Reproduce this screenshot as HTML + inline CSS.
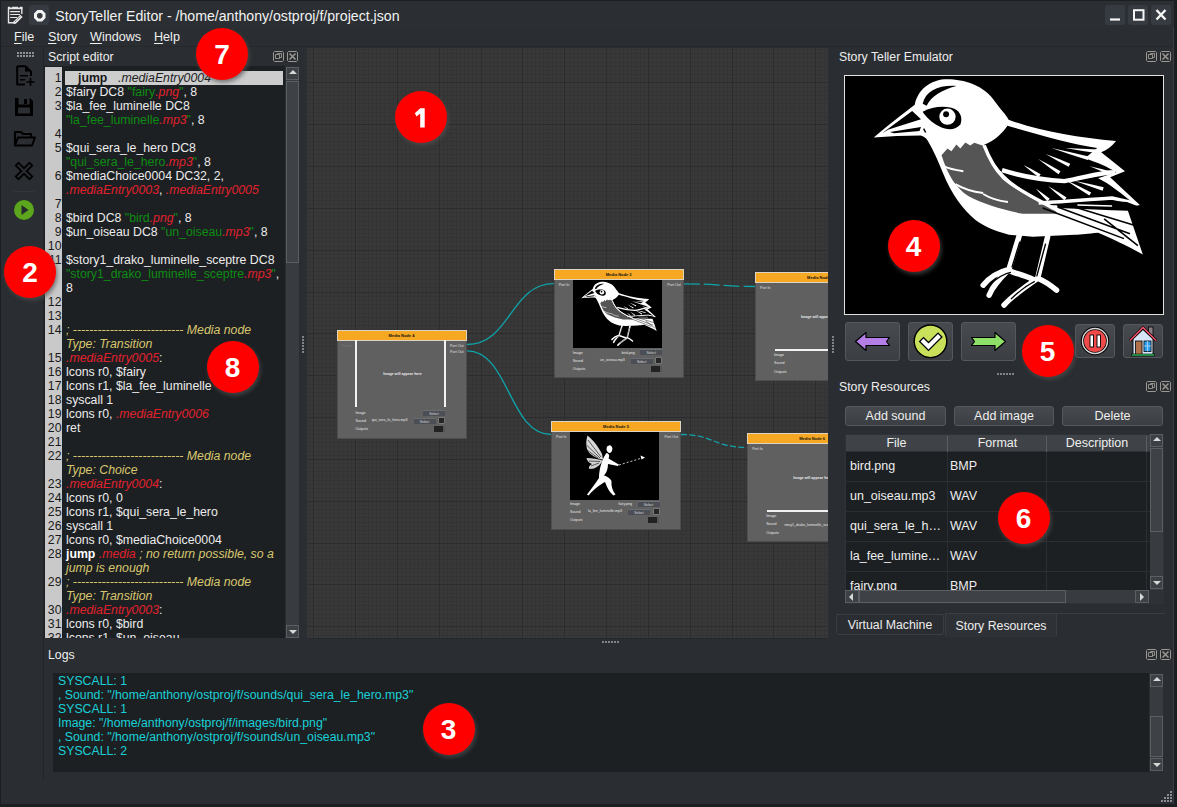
<!DOCTYPE html>
<html><head><meta charset="utf-8">
<style>
*{margin:0;padding:0;box-sizing:border-box}
html,body{width:1177px;height:807px;overflow:hidden;background:#2a2d31;font-family:"Liberation Sans",sans-serif;color:#e6e6e6}
.a{position:absolute}
.t{position:absolute;white-space:pre;line-height:14px}
#title{left:0;top:0;width:1177px;height:27px;background:#2b2f33;border-top:1px solid #1c1f22}
#menu{left:0;top:27px;width:1177px;height:20px;background:#2a2d31;border-bottom:1px solid #25282b}
.menu span{position:absolute;top:29.5px;font-size:12.6px;color:#f0f0f0}
.u{text-decoration:underline;text-underline-offset:2px}
.wbtn{position:absolute;top:5px;width:20px;height:20px;background:#353a40;border-radius:3px}
.redc{position:absolute;width:52px;height:52px;border-radius:50%;background:#fe0000;color:#fff;font-weight:bold;font-size:28px;text-align:center;line-height:54.5px;box-shadow:1.5px 2.5px 4px rgba(80,80,80,0.7)}
.dtitle{position:absolute;font-size:12.3px;color:#eeeeee}
.dicon{position:absolute;width:11px;height:11px;border:1px solid #8a8a8a;border-radius:2px}
.ln{position:absolute;left:0;width:17.5px;text-align:right;font-size:12.3px;line-height:14px;color:#1a1a1a}
.cl{position:absolute;left:22px;white-space:pre;font-size:12.3px;line-height:14px;color:#ececec}
.s{color:#0d8c12}.x{color:#e0202c;font-style:italic}.c{color:#d8c76e;font-style:italic}.bb{font-weight:bold;color:#fff}
.nd{position:absolute;width:130px;height:109px;background:#606060;border:1px solid #4d4d4d}
.nh{position:absolute;left:-1px;top:-1px;width:130px;height:11px;background:#f6a822;border:1px solid #ddd3c2;font-size:4px;font-weight:bold;color:#111;text-align:center;line-height:9px}
.pin{position:absolute;left:4px;top:12px;font-size:3.6px;color:#e0e0e0;line-height:6px}
.pout{position:absolute;right:2px;top:12px;font-size:3.6px;color:#e0e0e0;line-height:6px}
.nimg{position:absolute;left:18px;top:10px;width:89px;height:68px;background:#000}
.ntx{position:absolute;font-size:3.6px;color:#e8e8e8;line-height:6px;white-space:nowrap}
.nbtn{position:absolute;height:6px;background:#4b4f55;font-size:3.4px;color:#ddd;text-align:center;line-height:6px;border-top:1px solid #6a6e73}
.btn{position:absolute;background:linear-gradient(#474b50,#3b3e43);border:1px solid #55595f;border-radius:3px}
.bt{font-size:12.5px;color:#eee;text-align:center;line-height:18px}
.th{position:absolute;top:0;height:17px;font-size:12.5px;color:#eee;text-align:center;line-height:17px}
.td{position:absolute;font-size:12.5px;color:#eee;white-space:nowrap;line-height:14px}
.sbt{position:absolute;background:#383b40}
.sbb{position:absolute;background:#3d4146;border:1px solid #5b5f64}
.sbh{position:absolute;background:#3e4247;border:1px solid #5b5f64}
.tri{position:absolute;width:0;height:0;border:4px solid transparent}
.tri.up{left:2px;top:0px;border-bottom:4px solid #d8d8d8;border-top-width:2px}
.tri.dn{left:2px;top:4px;border-top:4px solid #d8d8d8;border-bottom-width:2px}
.tri.lf{left:1px;top:1.5px;border-right:4px solid #d8d8d8;border-left-width:2px}
.tri.rt{left:4px;top:1.5px;border-left:4px solid #d8d8d8;border-right-width:2px}
.tab{position:absolute;border:1px solid #3a3d42;border-radius:0 0 3px 3px;font-size:12.3px;color:#eee;text-align:center;background:#2a2d31}
</style></head><body>
<svg width="0" height="0" style="position:absolute">
<defs>
<symbol id="bird" viewBox="0 0 320 240">
<rect x="0" y="0" width="320" height="240" fill="#000"/>
<path d="M29.7 63 C45 50 58 40 71 30 C73 20 80 8 98 4.5 C115 3 140 8 152 27 C157 34 163 40 165.7 45 C195 56 235 63 274 66.5 C270 72 264 76 259 78 L283 97 L268 103 L298 131 L285 134 L301 181 C285 172 268 164 256 159 C245 160 240 161 232 161 L190 163 L166 161 C150 157 140 152 132 146 C120 136 108 120 100 100 C95 88 90 76 84 66 C82 63 80 62 77 61 C60 61 45 62 29.7 63 Z" fill="#fff"/>
<path d="M164.5 51.2 C195 60 230 70 255 73.5 C250 78 246 81 242 84 C255 88 266 93 274 98 C268 100 262 102 256 104 C268 110 280 120 290 128 C275 131 262 129 250 128 C230 131 215 132 206 131 C193 126 182 119 172 111 C164 104 157 97 152 90 C148 84 144 77 141 70.4 C152 66 160 58 164.5 51.2 Z" fill="#000"/>
<path d="M98 81 L104 74 L108 77 L113 70 L117 74 L122 68 L127 71 L131 68.4 L140 71.4 C145 82 150 92 157 100 C168 112 185 124 210 133 L215 140 L180 140 C160 136 140 130 125 122 C112 114 104 100 98 81 Z" fill="#555"/>
<path d="M141 71 C146 84 152 95 160 103 C175 117 200 128 214 136" stroke="#fff" stroke-width="3.5" fill="none"/>
<path d="M159 96 C175 101 200 106 222 107 C240 104 258 98 273 98" stroke="#fff" stroke-width="4.5" fill="none"/>
<path d="M196 129 C215 128 240 126 270 124 L292 129" stroke="#fff" stroke-width="3.5" fill="none"/>
<path d="M180.6 90.8 Q188.1 97.2 196.0 103.0 L198.0 100.0 Q189.5 95.1 180.6 90.8 Z M195.5 84.7 Q205.6 92.7 216.0 100.0 L218.0 97.0 Q206.9 90.5 195.5 84.7 Z M203.0 79.7 Q214.5 86.5 226.2 92.6 L227.8 89.4 Q215.5 84.2 203.0 79.7 Z M209.0 73.5 Q227.2 80.0 245.5 85.7 L246.5 82.3 Q227.8 77.5 209.0 73.5 Z M222.7 73.5 Q239.2 76.5 255.8 78.8 L256.2 75.2 Q239.5 74.0 222.7 73.5 Z M193.0 114.4 Q198.7 121.1 204.8 127.3 L207.2 124.7 Q200.3 119.3 193.0 114.4 Z M205.4 112.0 Q213.5 119.5 221.9 126.4 L224.1 123.6 Q214.9 117.5 205.4 112.0 Z M222.7 105.7 Q234.7 113.9 247.1 121.6 L248.9 118.4 Q236.0 111.8 222.7 105.7 Z M232.7 107.0 Q246.5 112.2 260.5 116.7 L261.5 113.3 Q247.2 109.8 232.7 107.0 Z M247.5 92.0 Q259.4 97.2 271.4 101.7 L272.6 98.3 Q260.1 94.8 247.5 92.0 Z" fill="#fff"/>
<path d="M214 131 C240 128 265 127 285 128 L298 133 L287 137 C265 136 240 135 216 134 Z" fill="#000"/>
<path d="M235 131 L270 132" stroke="#fff" stroke-width="1.5"/>
<path d="M200 134 L282 165 M215 133 L288 160 M232 133 L294 152 M262 145 L296 172" stroke="#000" stroke-width="1.6" fill="none"/>
<path d="M100 92 C106 95 112 96 120 97 M112 110 C122 116 132 118 140 119 M140 120 C148 125 156 127 165 128" stroke="#fff" stroke-width="2" fill="none"/>
<path d="M79 29 C82 16 95 10 113 11 C98 15 88 21 83 31 Z" fill="#000"/>
<path d="M79 37 C88 32 99 31 108 33 C116 35 120 42 117 50 C112 56 104 56 96 52 C88 48 82 42 79 37 Z" fill="#000"/>
<circle cx="104" cy="42" r="8.2" fill="#fff"/>
<circle cx="102.6" cy="39.6" r="3" fill="#000"/>
<path d="M38 58.7 L68.4 36.4 L77.3 44.6 L44.6 55 Z M46 57.5 L77.3 52.5 L75.8 56.5 L50 58.7 Z" fill="#000"/>
<path d="M80 54 L82 58" stroke="#000" stroke-width="1.5"/>
<path d="M177 160 L166 196 C158 198 148 202 140 212 M166 196 C158 204 150 212 146 222 M205 163 L195 205 C185 212 170 222 161 232 M195 205 C202 208 208 212 214 217 M168 198 C172 200 182 202 190 206" stroke="#fff" stroke-width="5.5" fill="none" stroke-linejoin="round" stroke-linecap="round"/>
<path d="M177 168 L169 194 M203 170 L194 203 M147 211 C155 204 162 200 168 199 M153 220 C160 212 168 206 176 204 M168 226 C176 218 184 212 192 208" stroke="#000" stroke-width="1.4" fill="none"/>
</symbol>
<symbol id="fairy" viewBox="0 0 89 68">
<rect width="89" height="68" fill="#000"/>
<path d="M17.5 3.5 C22 7 28 14 32 22 L33 27.5 C28 27 22 24 18.5 20 C16 16 15.5 10 17.5 3.5 Z" fill="#d8d8d8"/>
<path d="M18 8 L31 25 M16.5 13 L30 26 M17 18 L28 26" stroke="#000" stroke-width="0.6"/>
<path d="M16.5 26 C22 26 28 27 32.5 28.5 C31 32 28 35 24 36.5 L19.5 37 C18 35 20 33 22 32 C19 31 17 29 16.5 26 Z" fill="#d0d0d0"/>
<path d="M19 29 L30 29.5 M21 34 L29 31" stroke="#000" stroke-width="0.6"/>
<path d="M37 14.5 L40 13 L42 15 C43 17 42 20 40 21 C38 21 36.5 19 36.5 17 Z" fill="#fff"/>
<path d="M36.5 21 C39 21.5 40 23.5 38.5 26.5 L47 31.5 L49 32.5 L48 34 L38 32 C38 37 36.5 41 34 43.5 C37 44.5 40 46 41.5 49 C41 54 42.5 59 45.5 62.5 L43.5 63.5 C39 60 37 55 35 50 C31 52 25 56 18.5 63.5 L17 62.5 C21.5 57 25.5 51 29 46 C29 39 31 31 33.5 26 C34.5 24 35.5 22 36.5 21 Z" fill="#fff"/>
<path d="M49 33 L72 26" stroke="#ddd" stroke-width="0.9" stroke-dasharray="2 2"/>
<path d="M75 25.5 L70.5 23.5 L71.5 27.5 Z" fill="#fff"/>
</symbol>
<symbol id="dfl" viewBox="0 0 11 11">
<path d="M1.5 0.5 H9.5 L10.5 1.5 V9.5 L9.5 10.5 H1.5 L0.5 9.5 V1.5 Z" stroke="#9b9892" fill="none"/>
<path d="M2.5 3.5 H6.5 V7.5 H2.5 Z M4.5 3.5 V2.5 H8.5 V6.5 H6.5" stroke="#9b9892" fill="none" stroke-width="0.9"/>
</symbol>
<symbol id="dcl" viewBox="0 0 11 11">
<path d="M1.5 0.5 H9.5 L10.5 1.5 V9.5 L9.5 10.5 H1.5 L0.5 9.5 V1.5 Z" stroke="#9b9892" fill="none"/>
<path d="M2.5 2.5 L8.5 8.5 M8.5 2.5 L2.5 8.5" stroke="#9b9892" stroke-width="1.5"/>
</symbol>
</defs>
</svg>

<div id="title" class="a"></div>
<div id="menu" class="a"></div>
<div class="menu">
<span style="left:14px"><span class="u" style="position:static">F</span>ile</span>
<span style="left:48px"><span class="u" style="position:static">S</span>tory</span>
<span style="left:90px"><span class="u" style="position:static">W</span>indows</span>
<span style="left:154px"><span class="u" style="position:static">H</span>elp</span>
</div>
<div class="t" style="left:55.3px;top:9.3px;font-size:14.15px;color:#f2f2f2">StoryTeller Editor - /home/anthony/ostproj/f/project.json</div>
<div class="wbtn" style="left:1105px"></div>
<div class="wbtn" style="left:1128px"></div>
<div class="wbtn" style="left:1151px"></div>

<!-- left toolbar -->
<div class="a" style="left:0;top:47px;width:44px;height:593px;background:#2a2d31;border-right:1px solid #222528"></div>


<!-- title icons -->
<svg class="a" style="left:0;top:0" width="30" height="27" viewBox="0 0 30 27">
<path d="M8.5 7.2 V22.8 H14" stroke="#e6e6e6" stroke-width="1.4" fill="none"/>
<path d="M21.8 7.2 V14" stroke="#e6e6e6" stroke-width="1.4" fill="none"/>
<path d="M8 6.8 H10.2 V7.6 H12 V6.8 H18 V7.6 H19.8 V6.8 H22.4 V9.3 H8 Z" fill="#e6e6e6"/>
<path d="M10.2 11.6 H20 M10.2 14.5 H20 M10.2 17.5 H17" stroke="#e6e6e6" stroke-width="1.2"/>
<path d="M13.6 21.6 L20.4 14.8 L22.6 17 L15.8 23.8 L13.4 23.9 Z" fill="#e6e6e6"/>
<path d="M15.2 21.7 L20.6 16.3" stroke="#2b2f33" stroke-width="0.9" stroke-dasharray="1 1"/>
</svg>
<div class="a" style="left:29px;top:5px;width:20px;height:20px;background:#363b42;border-radius:3px"></div>
<svg class="a" style="left:33.7px;top:9.6px" width="12" height="12" viewBox="0 0 12 12">
<path d="M4 1.5 H7.5 L10 4 V7.5 L7.5 10 H4 L1.5 7.5 V4 Z" stroke="#f4f4f4" stroke-width="3" fill="none"/>
</svg>
<!-- window buttons -->
<svg class="a" style="left:1105px;top:5px" width="66" height="20" viewBox="0 0 66 20">
<rect x="0" y="0" width="20" height="20" rx="3" fill="#363b42"/>
<rect x="23" y="0" width="20" height="20" rx="3" fill="#363b42"/>
<rect x="46" y="0" width="20" height="20" rx="3" fill="#363b42"/>
<path d="M5 14.5 H15" stroke="#f6f6f6" stroke-width="2.2"/>
<rect x="29" y="5.2" width="9.5" height="9.5" stroke="#f6f6f6" stroke-width="2" fill="none"/>
<path d="M51.5 5 L60.5 14.5 M60.5 5 L51.5 14.5" stroke="#f6f6f6" stroke-width="2.4"/>
</svg>
<!-- toolbar -->
<svg class="a" style="left:0;top:47px" width="44" height="193" viewBox="0 47 44 193">
<g fill="#8e9196"><rect x="17" y="52" width="2" height="2"/><rect x="20" y="52" width="2" height="2"/><rect x="23" y="52" width="2" height="2"/><rect x="26" y="52" width="2" height="2"/><rect x="29" y="52" width="2" height="2"/><rect x="32" y="52" width="2" height="2"/>
<rect x="17" y="55" width="2" height="2"/><rect x="20" y="55" width="2" height="2"/><rect x="23" y="55" width="2" height="2"/><rect x="26" y="55" width="2" height="2"/><rect x="29" y="55" width="2" height="2"/><rect x="32" y="55" width="2" height="2"/></g>
<path d="M17.2 66.2 H25.5 L31 71.7 V76 M17.2 66 V84.5 H25" stroke="#000" stroke-width="2" fill="none" stroke-linejoin="round"/>
<path d="M25 66 V71.5 H31 Z" fill="#000"/>
<path d="M20 75.8 H28 M20 79.8 H25" stroke="#000" stroke-width="1.6"/>
<path d="M26.5 82 H34.5 M30.5 78 V86" stroke="#000" stroke-width="1.6"/>
<path d="M15 98 H30 L33 101 V116 H15 Z" fill="#000"/>
<rect x="18.5" y="98" width="11" height="6.5" fill="#2a2d31"/>
<rect x="24" y="99" width="3" height="5" fill="#000"/>
<rect x="18" y="107.5" width="12" height="6" fill="#2a2d31"/>
<path d="M15 145.5 V132 H21 L23 134 H31 V137.5" stroke="#000" stroke-width="2.2" fill="none" stroke-linejoin="round"/>
<path d="M15 145.5 L18 137.5 H35 L32 145.5 Z" stroke="#000" stroke-width="2" fill="none" stroke-linejoin="round"/>
<path d="M18.5 165.5 L29.5 176.5 M29.5 165.5 L18.5 176.5" stroke="#000" stroke-width="5.6" stroke-linecap="square"/>
<path d="M18.5 165.5 L29.5 176.5 M29.5 165.5 L18.5 176.5" stroke="#2a2d31" stroke-width="2" stroke-linecap="square"/>
<path d="M14 191.5 H34" stroke="#33363b" stroke-width="1"/>
<circle cx="24" cy="210" r="10" fill="#5ba61c"/>
<path d="M21.5 205 L28.5 210 L21.5 215 Z" fill="#262a2e"/>
</svg>

<!-- script editor -->
<div class="dtitle" style="left:48px;top:50px">Script editor</div>
<div class="a" style="left:44px;top:66px;width:240.5px;height:572px;background:#1d2023"></div>
<div class="a" style="left:44px;top:66px;width:240px;height:572px;overflow:hidden">
<div class="a" style="left:1px;top:1px;width:17px;height:571px;background:#c9c9c9"></div>
<div class="ln" style="top:5px">1</div>
<div class="a" style="left:21px;top:5px;width:218px;height:14px;background:#cdcdcd"></div>
<div class="cl" style="top:5px;left:34px;color:#161616;font-weight:bold">jump</div>
<div class="cl" style="top:5px;left:74px;color:#1c1c1c;font-style:italic">.mediaEntry0004</div>
<div class="ln" style="top:19px">2</div>
<div class="cl" style="top:19px">$fairy DC8 <span class="s">"fairy<span class="x">.png</span>"</span>, 8</div>
<div class="ln" style="top:33px">3</div>
<div class="cl" style="top:33px">$la_fee_luminelle DC8</div>
<div class="cl" style="top:47px"><span class="s">"la_fee_luminelle<span class="x">.mp3</span>"</span>, 8</div>
<div class="ln" style="top:61px">4</div>
<div class="ln" style="top:75px">5</div>
<div class="cl" style="top:75px">$qui_sera_le_hero DC8</div>
<div class="cl" style="top:89px"><span class="s">"qui_sera_le_hero<span class="x">.mp3</span>"</span>, 8</div>
<div class="ln" style="top:103px">6</div>
<div class="cl" style="top:103px">$mediaChoice0004 DC32, 2,</div>
<div class="cl" style="top:117px"><span class="x">.mediaEntry0003</span>, <span class="x">.mediaEntry0005</span></div>
<div class="ln" style="top:131px">7</div>
<div class="ln" style="top:145px">8</div>
<div class="cl" style="top:145px">$bird DC8 <span class="s">"bird<span class="x">.png</span>"</span>, 8</div>
<div class="ln" style="top:159px">9</div>
<div class="cl" style="top:159px">$un_oiseau DC8 <span class="s">"un_oiseau<span class="x">.mp3</span>"</span>, 8</div>
<div class="ln" style="top:173px">10</div>
<div class="ln" style="top:187px">11</div>
<div class="cl" style="top:187px">$story1_drako_luminelle_sceptre DC8</div>
<div class="cl" style="top:201px"><span class="s">"story1_drako_luminelle_sceptre<span class="x">.mp3</span>"</span>,</div>
<div class="cl" style="top:215px">8</div>
<div class="ln" style="top:229px">12</div>
<div class="ln" style="top:243px">13</div>
<div class="ln" style="top:257px">14</div>
<div class="cl" style="top:257px"><span class="c">; --------------------------- Media node</span></div>
<div class="cl" style="top:271px"><span class="c">Type: Transition</span></div>
<div class="ln" style="top:285px">15</div>
<div class="cl" style="top:285px"><span class="x">.mediaEntry0005</span>:</div>
<div class="ln" style="top:299px">16</div>
<div class="cl" style="top:299px">lcons r0, $fairy</div>
<div class="ln" style="top:313px">17</div>
<div class="cl" style="top:313px">lcons r1, $la_fee_luminelle</div>
<div class="ln" style="top:327px">18</div>
<div class="cl" style="top:327px">syscall 1</div>
<div class="ln" style="top:341px">19</div>
<div class="cl" style="top:341px">lcons r0, <span class="x">.mediaEntry0006</span></div>
<div class="ln" style="top:355px">20</div>
<div class="cl" style="top:355px">ret</div>
<div class="ln" style="top:369px">21</div>
<div class="ln" style="top:383px">22</div>
<div class="cl" style="top:383px"><span class="c">; --------------------------- Media node</span></div>
<div class="cl" style="top:397px"><span class="c">Type: Choice</span></div>
<div class="ln" style="top:411px">23</div>
<div class="cl" style="top:411px"><span class="x">.mediaEntry0004</span>:</div>
<div class="ln" style="top:425px">24</div>
<div class="cl" style="top:425px">lcons r0, 0</div>
<div class="ln" style="top:439px">25</div>
<div class="cl" style="top:439px">lcons r1, $qui_sera_le_hero</div>
<div class="ln" style="top:453px">26</div>
<div class="cl" style="top:453px">syscall 1</div>
<div class="ln" style="top:467px">27</div>
<div class="cl" style="top:467px">lcons r0, $mediaChoice0004</div>
<div class="ln" style="top:481px">28</div>
<div class="cl" style="top:481px"><span class="bb">jump</span> <span class="x">.media</span> <span class="c">; no return possible, so a</span></div>
<div class="cl" style="top:495px"><span class="c">jump is enough</span></div>
<div class="ln" style="top:509px">29</div>
<div class="cl" style="top:509px"><span class="c">; --------------------------- Media node</span></div>
<div class="cl" style="top:523px"><span class="c">Type: Transition</span></div>
<div class="ln" style="top:537px">30</div>
<div class="cl" style="top:537px"><span class="x">.mediaEntry0003</span>:</div>
<div class="ln" style="top:551px">31</div>
<div class="cl" style="top:551px">lcons r0, $bird</div>
<div class="ln" style="top:565px">32</div>
<div class="cl" style="top:565px">lcons r1, $un_oiseau</div>
</div>

<!-- node editor -->
<div class="a" style="left:307px;top:48px;width:521px;height:590px;overflow:hidden;background:#383838">
<svg class="a" style="left:0;top:0" width="521" height="590">
<path d="M2.5 0V590M11.5 0V590M15.5 0V590M19.5 0V590M23.5 0V590M27.5 0V590M31.5 0V590M36.5 0V590M40.5 0V590M44.5 0V590M52.5 0V590M57.5 0V590M61.5 0V590M65.5 0V590M69.5 0V590M73.5 0V590M77.5 0V590M82.5 0V590M86.5 0V590M94.5 0V590M98.5 0V590M103.5 0V590M107.5 0V590M111.5 0V590M115.5 0V590M119.5 0V590M123.5 0V590M128.5 0V590M136.5 0V590M140.5 0V590M144.5 0V590M149.5 0V590M153.5 0V590M157.5 0V590M161.5 0V590M165.5 0V590M169.5 0V590M178.5 0V590M182.5 0V590M186.5 0V590M190.5 0V590M195.5 0V590M199.5 0V590M203.5 0V590M207.5 0V590M211.5 0V590M220.5 0V590M224.5 0V590M228.5 0V590M232.5 0V590M236.5 0V590M241.5 0V590M245.5 0V590M249.5 0V590M253.5 0V590M262.5 0V590M266.5 0V590M270.5 0V590M274.5 0V590M278.5 0V590M282.5 0V590M287.5 0V590M291.5 0V590M295.5 0V590M303.5 0V590M308.5 0V590M312.5 0V590M316.5 0V590M320.5 0V590M324.5 0V590M328.5 0V590M333.5 0V590M337.5 0V590M345.5 0V590M349.5 0V590M354.5 0V590M358.5 0V590M362.5 0V590M366.5 0V590M370.5 0V590M374.5 0V590M379.5 0V590M387.5 0V590M391.5 0V590M395.5 0V590M400.5 0V590M404.5 0V590M408.5 0V590M412.5 0V590M416.5 0V590M420.5 0V590M429.5 0V590M433.5 0V590M437.5 0V590M441.5 0V590M446.5 0V590M450.5 0V590M454.5 0V590M458.5 0V590M462.5 0V590M471.5 0V590M475.5 0V590M479.5 0V590M483.5 0V590M487.5 0V590M492.5 0V590M496.5 0V590M500.5 0V590M504.5 0V590M512.5 0V590M517.5 0V590M521.5 0V590M0 1.5H521M0 5.5H521M0 9.5H521M0 14.5H521M0 18.5H521M0 22.5H521M0 26.5H521M0 30.5H521M0 39.5H521M0 43.5H521M0 47.5H521M0 51.5H521M0 55.5H521M0 60.5H521M0 64.5H521M0 68.5H521M0 72.5H521M0 81.5H521M0 85.5H521M0 89.5H521M0 93.5H521M0 97.5H521M0 101.5H521M0 106.5H521M0 110.5H521M0 114.5H521M0 122.5H521M0 127.5H521M0 131.5H521M0 135.5H521M0 139.5H521M0 143.5H521M0 147.5H521M0 152.5H521M0 156.5H521M0 164.5H521M0 168.5H521M0 173.5H521M0 177.5H521M0 181.5H521M0 185.5H521M0 189.5H521M0 193.5H521M0 198.5H521M0 206.5H521M0 210.5H521M0 214.5H521M0 219.5H521M0 223.5H521M0 227.5H521M0 231.5H521M0 235.5H521M0 239.5H521M0 248.5H521M0 252.5H521M0 256.5H521M0 260.5H521M0 265.5H521M0 269.5H521M0 273.5H521M0 277.5H521M0 281.5H521M0 290.5H521M0 294.5H521M0 298.5H521M0 302.5H521M0 306.5H521M0 311.5H521M0 315.5H521M0 319.5H521M0 323.5H521M0 331.5H521M0 336.5H521M0 340.5H521M0 344.5H521M0 348.5H521M0 352.5H521M0 357.5H521M0 361.5H521M0 365.5H521M0 373.5H521M0 377.5H521M0 382.5H521M0 386.5H521M0 390.5H521M0 394.5H521M0 398.5H521M0 403.5H521M0 407.5H521M0 415.5H521M0 419.5H521M0 423.5H521M0 428.5H521M0 432.5H521M0 436.5H521M0 440.5H521M0 444.5H521M0 449.5H521M0 457.5H521M0 461.5H521M0 465.5H521M0 469.5H521M0 474.5H521M0 478.5H521M0 482.5H521M0 486.5H521M0 490.5H521M0 499.5H521M0 503.5H521M0 507.5H521M0 511.5H521M0 515.5H521M0 520.5H521M0 524.5H521M0 528.5H521M0 532.5H521M0 541.5H521M0 545.5H521M0 549.5H521M0 553.5H521M0 557.5H521M0 561.5H521M0 566.5H521M0 570.5H521M0 574.5H521M0 582.5H521M0 587.5H521" stroke="#343434" stroke-width="1"/>
<path d="M6.5 0V590M48.5 0V590M90.5 0V590M132.5 0V590M174.5 0V590M215.5 0V590M257.5 0V590M299.5 0V590M341.5 0V590M383.5 0V590M425.5 0V590M466.5 0V590M508.5 0V590M0 34.5H521M0 76.5H521M0 118.5H521M0 160.5H521M0 202.5H521M0 244.5H521M0 285.5H521M0 327.5H521M0 369.5H521M0 411.5H521M0 453.5H521M0 495.5H521M0 536.5H521M0 578.5H521" stroke="#2c2c2c" stroke-width="1"/>
<path d="M160.0 296.5 C203.4 296.5 203.4 235.7 246.7 235.7" stroke="#0fa3aa" stroke-width="1.3" fill="none"/>
<path d="M160.0 302.8 C202.0 302.8 202.0 386.5 244.0 386.5" stroke="#0fa3aa" stroke-width="1.3" fill="none"/>
<path d="M376.7 235.8 C412.4 235.8 412.4 238.5 448.0 238.5" stroke="#0fa3aa" stroke-width="1.3" fill="none" stroke-dasharray="16 4"/>
<path d="M373.7 386.5 C407.0 386.5 407.0 399.5 440.2 399.5" stroke="#0fa3aa" stroke-width="1.3" fill="none" stroke-dasharray="6 2.5"/>
</svg>
<div class="nd" style="left:29.5px;top:281.6px">
<div class="nh">Media Node 4</div>
<div class="pin" style="color:#7a7a7a">Port In</div>
<div class="pout" style="top:12px">Port Out</div><div class="pout" style="top:18.3px">Port Out</div>
<div class="a" style="left:17.5px;top:9px;width:1.5px;height:67px;background:#f2f2f2"></div>
<div class="a" style="left:106.5px;top:9px;width:1.5px;height:67px;background:#f2f2f2"></div>
<div class="ntx" style="left:0;width:130px;text-align:center;top:40.5px;font-weight:bold">Image will appear here</div>
<div class="ntx" style="left:18px;top:79.3px">Image</div>
<div class="ntx" style="left:18px;top:87.3px">Sound</div>
<div class="ntx" style="left:18px;top:95.5px">Outputs</div>
<div class="ntx" style="right:48px;top:79.3px"></div>
<div class="nbtn" style="left:85.5px;top:79px;width:22px">Select</div>
<div class="ntx" style="right:58px;top:86.5px">qui_sera_le_hero.mp3</div>
<div class="nbtn" style="left:76px;top:87.5px;width:22px">Select</div>
<div class="a" style="left:100.5px;top:86.5px;width:7px;height:7px;background:#262626;border:1px solid #777;border-radius:1px"></div>
<div class="a" style="left:96px;top:95.5px;width:11px;height:6px;background:#222;border-right:2px solid #555"></div>
</div>
<div class="nd" style="left:246.7px;top:221.3px">
<div class="nh">Media Node 3</div>
<div class="pin">Port In</div>
<div class="pout">Port Out</div>
<div class="nimg"><svg width="89" height="68" viewBox="0 0 320 240" style="display:block"><use href="#bird"/></svg></div>
<div class="ntx" style="left:18px;top:79.3px">Image</div>
<div class="ntx" style="left:18px;top:87.3px">Sound</div>
<div class="ntx" style="left:18px;top:95.5px">Outputs</div>
<div class="ntx" style="right:48px;top:79.3px">bird.png</div>
<div class="nbtn" style="left:85.5px;top:79px;width:22px">Select</div>
<div class="ntx" style="right:58px;top:86.5px">un_oiseau.mp3</div>
<div class="nbtn" style="left:76px;top:87.5px;width:22px">Select</div>
<div class="a" style="left:100.5px;top:86.5px;width:7px;height:7px;background:#262626;border:1px solid #777;border-radius:1px"></div>
<div class="a" style="left:96px;top:95.5px;width:11px;height:6px;background:#222;border-right:2px solid #555"></div>
</div>
<div class="nd" style="left:244.0px;top:372.5px">
<div class="nh">Media Node 5</div>
<div class="pin">Port In</div>
<div class="pout">Port Out</div>
<div class="nimg"><svg width="89" height="68" viewBox="0 0 89 68" style="display:block"><use href="#fairy"/></svg></div>
<div class="ntx" style="left:18px;top:79.3px">Image</div>
<div class="ntx" style="left:18px;top:87.3px">Sound</div>
<div class="ntx" style="left:18px;top:95.5px">Outputs</div>
<div class="ntx" style="right:48px;top:79.3px">fairy.png</div>
<div class="nbtn" style="left:85.5px;top:79px;width:22px">Select</div>
<div class="ntx" style="right:58px;top:86.5px">la_fee_luminelle.mp3</div>
<div class="nbtn" style="left:76px;top:87.5px;width:22px">Select</div>
<div class="a" style="left:100.5px;top:86.5px;width:7px;height:7px;background:#262626;border:1px solid #777;border-radius:1px"></div>
<div class="a" style="left:96px;top:95.5px;width:11px;height:6px;background:#222;border-right:2px solid #555"></div>
</div>
<div class="nd" style="left:448.0px;top:224.0px">
<div class="nh">Media Node 2</div>
<div class="pin">Port In</div>
<div class="pout">Port Out</div>
<div class="a" style="left:18.5px;top:75.5px;width:120px;height:2px;background:#f2f2f2"></div>
<div class="ntx" style="left:45px;top:41px;font-weight:bold">Image will appear here</div>
<div class="ntx" style="left:18px;top:79.3px">Image</div>
<div class="ntx" style="left:18px;top:87.3px">Sound</div>
<div class="ntx" style="left:18px;top:95.5px">Outputs</div>
</div>
<div class="nd" style="left:440.2px;top:385.2px">
<div class="nh">Media Node 6</div>
<div class="pin">Port In</div>
<div class="pout">Port Out</div>
<div class="a" style="left:18.5px;top:75.5px;width:120px;height:2px;background:#f2f2f2"></div>
<div class="ntx" style="left:45px;top:41px;font-weight:bold">Image will appear here</div>
<div class="ntx" style="left:18px;top:79.3px">Image</div>
<div class="ntx" style="left:18px;top:87.3px">Sound</div>
<div class="ntx" style="left:18px;top:95.5px">Outputs</div>
<div class="ntx" style="left:36px;top:87.5px">story1_drako_luminelle_sceptre.mp3</div>
</div>
</div>

<!-- right docks -->
<div class="dtitle" style="left:839px;top:50px">Story Teller Emulator</div>
<div class="a" style="left:844px;top:75px;width:320px;height:240px;background:#000;border:1px solid #e0e0e0"></div>
<svg class="a" style="left:845px;top:76px" width="318" height="238" viewBox="1 1 318 238" preserveAspectRatio="none"><use href="#bird"/></svg>

<div class="dtitle" style="left:839px;top:380px">Story Resources</div>

<!-- emulator buttons -->
<div class="btn" style="left:845px;top:322px;width:55px;height:39px"></div>
<div class="btn" style="left:908px;top:322px;width:45px;height:39px"></div>
<div class="btn" style="left:961px;top:322px;width:55px;height:39px"></div>
<div class="btn" style="left:1075px;top:324px;width:40px;height:34px"></div>
<div class="btn" style="left:1123px;top:324px;width:40px;height:34px"></div>
<svg class="a" style="left:840px;top:315px" width="337" height="55" viewBox="840 315 337 55">
<path d="M855.5 341.5 L866 332.5 V337.5 H889.5 L886.5 341.5 L889.5 345.5 H866 V350.5 Z" fill="#b57de6" stroke="#000" stroke-width="1.2" stroke-linejoin="round"/>
<path d="M1005.5 341.5 L995 332.5 V337.5 H971.5 L974.5 341.5 L971.5 345.5 H995 V350.5 Z" fill="#8fe068" stroke="#000" stroke-width="1.2" stroke-linejoin="round"/>
<circle cx="930.5" cy="341.3" r="16.3" fill="#c9e05a" stroke="#000" stroke-width="1.4"/>
<path d="M923.5 341.5 L928.5 346.5 L938 337" stroke="#000" stroke-width="6.8" fill="none" stroke-linecap="square"/>
<path d="M923.5 341.5 L928.5 346.5 L938 337" stroke="#fff" stroke-width="4.2" fill="none" stroke-linecap="square"/>
<circle cx="1095" cy="341" r="14.2" fill="#000"/>
<circle cx="1095" cy="341" r="13.2" fill="#d9d9d9"/>
<circle cx="1095" cy="341" r="11.8" fill="#000"/>
<circle cx="1095" cy="341" r="11" fill="#f04a4a"/>
<rect x="1090" y="335" width="3.5" height="12" fill="#fff" stroke="#000" stroke-width="0.9"/>
<rect x="1097" y="335" width="3.5" height="12" fill="#fff" stroke="#000" stroke-width="0.9"/>
<rect x="1148.5" y="327" width="4.5" height="9" fill="#8a7f85" stroke="#000" stroke-width="0.8"/>
<path d="M1133 339 V355 H1153 V339 L1143 329.5 Z" fill="#d6e6f6" stroke="#000" stroke-width="0.9"/>
<path d="M1130 340.5 L1143 327.5 L1156 340.5" stroke="#000" stroke-width="3" fill="none"/>
<path d="M1130 340.5 L1143 327.5 L1156 340.5" stroke="#f0506a" stroke-width="1.6" fill="none"/>
<rect x="1135.5" y="341" width="6.5" height="13.5" fill="#b0704a" stroke="#000" stroke-width="0.8"/>
<rect x="1144" y="341" width="7" height="10.5" fill="#2da0f0" stroke="#000" stroke-width="0.8"/>
<path d="M1147.5 341 V351.5 M1144 346 H1151" stroke="#c8e0f8" stroke-width="0.7"/>
<rect x="1131.5" y="354" width="23" height="2" fill="#2fc060" stroke="#000" stroke-width="0.6"/>
</svg>
<!-- splitter dots -->
<svg class="a" style="left:996px;top:372px" width="19" height="4"><g fill="#80848a"><rect x="1" y="1" width="2" height="2"/><rect x="4" y="1" width="2" height="2"/><rect x="7" y="1" width="2" height="2"/><rect x="10" y="1" width="2" height="2"/><rect x="13" y="1" width="2" height="2"/><rect x="16" y="1" width="2" height="2"/></g></svg>
<svg class="a" style="left:831px;top:335px" width="4" height="19"><g fill="#80848a"><rect x="1" y="1" width="2" height="2"/><rect x="1" y="4" width="2" height="2"/><rect x="1" y="7" width="2" height="2"/><rect x="1" y="10" width="2" height="2"/><rect x="1" y="13" width="2" height="2"/><rect x="1" y="16" width="2" height="2"/></g></svg>
<svg class="a" style="left:301px;top:335px" width="4" height="19"><g fill="#80848a"><rect x="1" y="1" width="2" height="2"/><rect x="1" y="4" width="2" height="2"/><rect x="1" y="7" width="2" height="2"/><rect x="1" y="10" width="2" height="2"/><rect x="1" y="13" width="2" height="2"/><rect x="1" y="16" width="2" height="2"/></g></svg>
<svg class="a" style="left:601px;top:640px" width="19" height="4"><g fill="#80848a"><rect x="1" y="1" width="2" height="2"/><rect x="4" y="1" width="2" height="2"/><rect x="7" y="1" width="2" height="2"/><rect x="10" y="1" width="2" height="2"/><rect x="13" y="1" width="2" height="2"/><rect x="16" y="1" width="2" height="2"/></g></svg>

<!-- resources -->
<div class="btn bt" style="left:845px;top:406px;width:101px;height:20px">Add sound</div>
<div class="btn bt" style="left:954px;top:406px;width:100px;height:20px">Add image</div>
<div class="btn bt" style="left:1062px;top:406px;width:101px;height:20px">Delete</div>
<div class="a" style="left:845px;top:434px;width:319px;height:170px;background:#1d2023;border:1px solid #2f3236;overflow:hidden">
 <div class="a" style="left:0;top:0;width:304px;height:17px;background:#3f4348;border-bottom:1px solid #2c2f33"></div>
 <div class="th" style="left:0;width:101px">File</div>
 <div class="a" style="left:101px;top:1px;width:1px;height:16px;background:#5a5e63"></div>
 <div class="th" style="left:102px;width:99px">Format</div>
 <div class="a" style="left:200px;top:1px;width:1px;height:16px;background:#5a5e63"></div>
 <div class="th" style="left:201px;width:100px">Description</div>
 <div class="a" style="left:300px;top:1px;width:1px;height:16px;background:#5a5e63"></div>
 <div class="a" style="left:101px;top:17px;width:1px;height:140px;background:#2b2e32"></div>
 <div class="a" style="left:200px;top:17px;width:1px;height:140px;background:#2b2e32"></div>
 <div class="a" style="left:300px;top:17px;width:1px;height:140px;background:#2b2e32"></div>
 <div class="a" style="left:0;top:45.5px;width:304px;height:1px;background:#2b2e32"></div>
 <div class="a" style="left:0;top:75.5px;width:304px;height:1px;background:#2b2e32"></div>
 <div class="a" style="left:0;top:105.5px;width:304px;height:1px;background:#2b2e32"></div>
 <div class="a" style="left:0;top:135.5px;width:304px;height:1px;background:#2b2e32"></div>
 <div class="td" style="left:4px;top:24px">bird.png</div><div class="td" style="left:104px;top:24px">BMP</div>
 <div class="td" style="left:4px;top:54px">un_oiseau.mp3</div><div class="td" style="left:104px;top:54px">WAV</div>
 <div class="td" style="left:4px;top:84px">qui_sera_le_h…</div><div class="td" style="left:104px;top:84px">WAV</div>
 <div class="td" style="left:4px;top:114px">la_fee_lumine…</div><div class="td" style="left:104px;top:114px">WAV</div>
 <div class="a" style="left:0;top:143px;width:304px;height:12px;overflow:hidden"><div class="td" style="left:4px;top:1px">fairy.png</div><div class="td" style="left:104px;top:1px">BMP</div></div>
</div>
<!-- table v scrollbar -->
<div class="sbt" style="left:1150px;top:434px;width:13px;height:156px"></div>
<div class="sbb" style="left:1150px;top:434px;width:13px;height:13px"><div class="tri up"></div></div>
<div class="sbh" style="left:1150px;top:448px;width:13px;height:84px"></div>
<div class="sbb" style="left:1150px;top:576px;width:13px;height:13px"><div class="tri dn"></div></div>
<!-- table h scrollbar -->
<div class="sbt" style="left:845px;top:590px;width:304px;height:13px"></div>
<div class="sbb" style="left:845px;top:590px;width:14px;height:13px"><div class="tri lf"></div></div>
<div class="sbh" style="left:859px;top:590px;width:207px;height:13px"></div>
<div class="sbb" style="left:1135px;top:590px;width:14px;height:13px"><div class="tri rt"></div></div>
<div class="a" style="left:1149px;top:590px;width:15px;height:13px;background:#2e3135"></div>

<!-- tabs -->
<div class="a" style="left:1057px;top:613px;width:108px;height:1px;background:#3a3d42"></div>
<div class="tab" style="left:836px;top:614px;width:108px;height:21px;padding-top:3px">Virtual Machine</div>
<div class="tab" style="left:945px;top:613px;width:112px;height:24px;background:#2e3236;padding-top:5px;border-bottom:none">Story Resources</div>

<!-- logs -->
<div class="dtitle" style="left:48px;top:648px">Logs</div>
<div class="a" style="left:53px;top:673px;width:1097px;height:99px;background:#1d2023"></div>
<div class="a" style="left:58px;top:674px;font-size:12.3px;line-height:14px;color:#19d0d6;white-space:pre">SYSCALL: 1
, Sound: "/home/anthony/ostproj/f/sounds/qui_sera_le_hero.mp3"
SYSCALL: 1
Image: "/home/anthony/ostproj/f/images/bird.png"
, Sound: "/home/anthony/ostproj/f/sounds/un_oiseau.mp3"
SYSCALL: 2</div>
<div class="a" style="left:1149px;top:673px;width:15px;height:99px;background:#2a2d31"></div>
<div class="sbt" style="left:1150px;top:674px;width:13px;height:97px"></div>
<div class="sbb" style="left:1150px;top:674px;width:13px;height:13px"><div class="tri up"></div></div>
<div class="sbh" style="left:1150px;top:716px;width:13px;height:41px"></div>
<div class="sbb" style="left:1150px;top:758px;width:13px;height:13px"><div class="tri dn"></div></div>
<!-- script editor scrollbar -->
<div class="sbt" style="left:286px;top:67px;width:13px;height:571px"></div>
<div class="sbb" style="left:286px;top:67px;width:13px;height:13px"><div class="tri up"></div></div>
<div class="sbh" style="left:286px;top:81px;width:13px;height:182px"></div>
<div class="sbb" style="left:286px;top:625px;width:13px;height:13px"><div class="tri dn"></div></div>
<!-- dock icons -->
<svg class="a" style="left:273px;top:51px" width="11" height="11"><use href="#dfl"/></svg>
<svg class="a" style="left:287px;top:51px" width="11" height="11"><use href="#dcl"/></svg>
<svg class="a" style="left:1146px;top:51px" width="11" height="11"><use href="#dfl"/></svg>
<svg class="a" style="left:1160px;top:51px" width="11" height="11"><use href="#dcl"/></svg>
<svg class="a" style="left:1146px;top:381px" width="11" height="11"><use href="#dfl"/></svg>
<svg class="a" style="left:1160px;top:381px" width="11" height="11"><use href="#dcl"/></svg>
<svg class="a" style="left:1146px;top:649px" width="11" height="11"><use href="#dfl"/></svg>
<svg class="a" style="left:1160px;top:649px" width="11" height="11"><use href="#dcl"/></svg>
<!-- frame lines -->
<div class="a" style="left:43px;top:640px;width:1px;height:140px;background:#222528"></div>
<div class="a" style="left:0;top:804px;width:1177px;height:3px;background:#1c1e21"></div>
<div class="a" style="left:1173px;top:27px;width:1px;height:777px;background:#3a3e43"></div>
<div class="a" style="left:1174px;top:0;width:3px;height:807px;background:#1c1e21"></div>
<div class="a" style="left:0;top:0;width:1px;height:807px;background:#1c1e21"></div>
<svg class="a" style="left:1160px;top:790px" width="13" height="12"><g fill="#8a8e93"><rect x="10" y="1" width="2" height="2"/><rect x="7" y="4" width="2" height="2"/><rect x="10" y="4" width="2" height="2"/><rect x="4" y="7" width="2" height="2"/><rect x="7" y="7" width="2" height="2"/><rect x="10" y="7" width="2" height="2"/><rect x="1" y="10" width="2" height="2"/><rect x="4" y="10" width="2" height="2"/><rect x="7" y="10" width="2" height="2"/><rect x="10" y="10" width="2" height="2"/></g></svg>

<div class="a" style="left:307px;top:637.5px;width:521px;height:1px;background:#25282b"></div>

<!-- red circles -->
<div class="redc" style="left:394.5px;top:91px"><svg style="position:absolute;left:0;top:0" width="52" height="52"><path d="M25.2 17.2 H29.7 V36.6 H25.2 V22.6 L21.6 25.4 L19.8 22.2 Z" fill="#fff"/></svg></div>
<div class="redc" style="left:4px;top:245.5px">2</div>
<div class="redc" style="left:422.5px;top:702.5px">3</div>
<div class="redc" style="left:887.5px;top:219.5px">4</div>
<div class="redc" style="left:1021.5px;top:324.5px">5</div>
<div class="redc" style="left:997.5px;top:491.5px">6</div>
<div class="redc" style="left:196px;top:27.5px">7</div>
<div class="redc" style="left:206.5px;top:340.5px">8</div>
</body></html>
